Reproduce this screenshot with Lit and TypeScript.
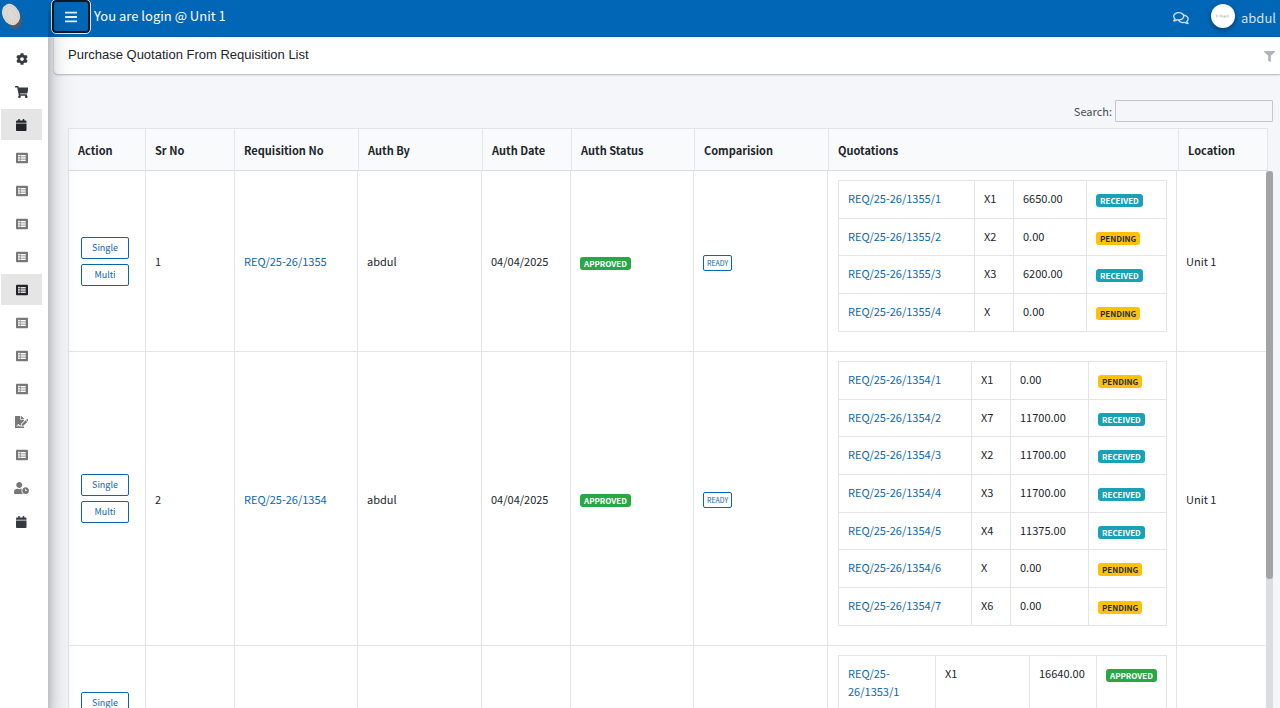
import { LitElement, html, css, svg } from "lit";
import { customElement, property, state } from "lit/decorators.js";
import { classMap } from "lit/directives/class-map.js";

const ICONS: Record<string, { w: number; d: string }> = {
  bars: { w: 448, d: "M16 132h416c8.837 0 16-7.163 16-16V76c0-8.837-7.163-16-16-16H16C7.163 60 0 67.163 0 76v40c0 8.837 7.163 16 16 16zm0 160h416c8.837 0 16-7.163 16-16v-40c0-8.837-7.163-16-16-16H16c-8.837 0-16 7.163-16 16v40c0 8.837 7.163 16 16 16zm0 160h416c8.837 0 16-7.163 16-16v-40c0-8.837-7.163-16-16-16H16c-8.837 0-16 7.163-16 16v40c0 8.837 7.163 16 16 16z" },
  cog: { w: 512, d: "M487.4 315.7l-42.6-24.6c4.3-23.2 4.3-47 0-70.2l42.6-24.6c4.9-2.8 7.1-8.6 5.5-14-11.1-35.6-30-67.8-54.7-94.6-3.8-4.1-10-5.1-14.8-2.3L380.8 110c-17.9-15.4-38.5-27.3-60.8-35.1V25.8c0-5.6-3.9-10.5-9.4-11.7-36.7-8.2-74.3-7.8-109.2 0-5.5 1.2-9.4 6.1-9.4 11.7V75c-22.2 7.9-42.8 19.8-60.8 35.1L88.7 85.5c-4.9-2.8-11-1.9-14.8 2.3-24.7 26.7-43.6 58.9-54.7 94.6-1.7 5.4.6 11.2 5.5 14L67.3 221c-4.3 23.2-4.3 47 0 70.2l-42.6 24.6c-4.9 2.8-7.1 8.6-5.5 14 11.1 35.6 30 67.8 54.7 94.6 3.8 4.1 10 5.1 14.8 2.3l42.6-24.6c17.9 15.4 38.5 27.3 60.8 35.1v49.2c0 5.6 3.9 10.5 9.4 11.7 36.7 8.2 74.3 7.8 109.2 0 5.5-1.2 9.4-6.1 9.4-11.7v-49.2c22.2-7.9 42.8-19.8 60.8-35.1l42.6 24.6c4.9 2.8 11 1.9 14.8-2.3 24.7-26.7 43.6-58.9 54.7-94.6 1.5-5.5-.7-11.3-5.6-14.1zM256 336c-44.1 0-80-35.9-80-80s35.9-80 80-80 80 35.9 80 80-35.9 80-80 80z" },
  cart: { w: 576, d: "M528.12 301.319l47.273-208C578.806 78.301 567.391 64 551.99 64H159.208l-9.166-44.81C147.758 8.021 137.93 0 126.529 0H24C10.745 0 0 10.745 0 24v16c0 13.255 10.745 24 24 24h69.883l70.248 343.435C147.325 417.1 136 435.222 136 456c0 30.928 25.072 56 56 56s56-25.072 56-56c0-15.674-6.447-29.835-16.824-40h209.647C430.447 426.165 424 440.326 424 456c0 30.928 25.072 56 56 56s56-25.072 56-56c0-22.172-12.888-41.332-31.579-50.405l5.517-24.276c3.413-15.018-8.002-29.319-23.403-29.319H218.117l-6.545-32h293.145c11.206 0 20.92-7.754 23.403-18.681z" },
  calendar: { w: 448, d: "M12 192h424c6.6 0 12 5.4 12 12v260c0 26.5-21.5 48-48 48H48c-26.5 0-48-21.5-48-48V204c0-6.6 5.4-12 12-12zm436-44v-36c0-26.5-21.5-48-48-48h-48V12c0-6.6-5.4-12-12-12h-40c-6.6 0-12 5.4-12 12v52H160V12c0-6.6-5.4-12-12-12h-40c-6.6 0-12 5.4-12 12v52H48C21.5 64 0 85.5 0 112v36c0 6.6 5.4 12 12 12h424c6.6 0 12-5.4 12-12z" },
  list: { w: 512, d: "M464 480H48c-26.51 0-48-21.49-48-48V80c0-26.51 21.49-48 48-48h416c26.51 0 48 21.49 48 48v352c0 26.51-21.49 48-48 48zM128 120c-22.091 0-40 17.909-40 40s17.909 40 40 40 40-17.909 40-40-17.909-40-40-40zm0 96c-22.091 0-40 17.909-40 40s17.909 40 40 40 40-17.909 40-40-17.909-40-40-40zm0 96c-22.091 0-40 17.909-40 40s17.909 40 40 40 40-17.909 40-40-17.909-40-40-40zm288-136v-32c0-6.627-5.373-12-12-12H204c-6.627 0-12 5.373-12 12v32c0 6.627 5.373 12 12 12h200c6.627 0 12-5.373 12-12zm0 96v-32c0-6.627-5.373-12-12-12H204c-6.627 0-12 5.373-12 12v32c0 6.627 5.373 12 12 12h200c6.627 0 12-5.373 12-12zm0 96v-32c0-6.627-5.373-12-12-12H204c-6.627 0-12 5.373-12 12v32c0 6.627 5.373 12 12 12h200c6.627 0 12-5.373 12-12z" },
  sign: { w: 576, d: "M218.17 424.14c-2.95-5.92-8.09-6.52-10.17-6.52s-7.22.59-10.02 6.19l-7.67 15.34c-6.37 12.78-25.03 11.37-29.48-2.09L144 386.59l-10.61 31.88c-5.89 17.66-22.38 29.53-41 29.53H80c-8.84 0-16-7.16-16-16s7.16-16 16-16h12.39c4.83 0 9.11-3.08 10.64-7.66l18.19-54.64c3.3-9.81 12.44-16.41 22.78-16.41s19.48 6.59 22.77 16.41l13.88 41.64c19.75-16.19 54.06-9.7 66 14.16 1.89 3.78 5.49 5.95 9.36 6.26v-82.12l128-127.09V160H248c-13.2 0-24-10.8-24-24V0H24C10.7 0 0 10.7 0 24v464c0 13.3 10.7 24 24 24h336c13.3 0 24-10.7 24-24v-40l-128-.11c-16.12-.31-30.58-9.28-37.83-23.75zM384 121.9c0-6.3-2.5-12.4-7-16.9L279.1 7c-4.5-4.5-10.6-7-17-7H256v128h128v-6.1zm-96 225.06V416h68.99l161.68-162.78-67.88-67.88L288 346.96zm280.54-179.63l-31.87-31.87c-9.94-9.94-26.07-9.94-36.01 0l-27.25 27.25 67.88 67.88 27.25-27.25c9.95-9.94 9.95-26.07 0-36.01z" },
  userClock: { w: 640, d: "M496 224c-79.6 0-144 64.4-144 144s64.4 144 144 144 144-64.4 144-144-64.4-144-144-144zm64 150.3c0 5.3-4.4 9.7-9.7 9.7h-60.6c-5.3 0-9.7-4.4-9.7-9.7v-76.6c0-5.3 4.4-9.7 9.7-9.7h12.6c5.3 0 9.7 4.4 9.7 9.7V352h38.3c5.3 0 9.7 4.4 9.7 9.7v12.6zM320 368c0-27.8 6.7-54.1 18.2-77.5-8-1.5-16.2-2.5-24.6-2.5h-16.7c-22.2 10.2-46.9 16-72.9 16s-50.6-5.8-72.9-16h-16.7C60.2 288 0 348.2 0 422.4V464c0 26.5 21.5 48 48 48h347.1c-45.3-31.9-75.1-84.5-75.1-144zm-96-112c70.7 0 128-57.3 128-128S294.7 0 224 0 96 57.3 96 128s57.3 128 128 128z" },
  filter: { w: 512, d: "M487.976 0H24.028C2.71 0-8.047 25.866 7.058 40.971L192 225.941V432c0 7.831 3.821 15.17 10.237 19.662l80 55.98C298.02 518.69 320 507.493 320 487.98V225.941l184.947-184.97C520.021 25.896 509.338 0 487.976 0z" },
  comments: { w: 576, d: "M532 386.2c27.5-27.1 44-61.1 44-98.2 0-80-76.5-146.1-176.2-157.9C368.3 72.5 294.3 32 208 32 93.1 32 0 103.6 0 192c0 37 16.5 71 44 98.2-15.3 30.7-37.3 54.5-37.7 54.9-6.3 6.7-8.1 16.5-4.4 25 3.6 8.5 12 14 21.2 14 53.5 0 96.7-20.2 125.2-38.8 9.2 2.1 18.7 3.7 28.4 4.9C208.1 407.6 281.8 448 368 448c20.8 0 40.8-2.4 59.8-6.8C456.3 459.7 499.4 480 553 480c9.2 0 17.5-5.5 21.2-14 3.6-8.5 1.9-18.3-4.4-25-.4-.3-22.5-24.1-37.8-54.8zm-392.8-92.3L122.1 305c-14.1 9.1-28.5 16.3-43.1 21.4 2.7-4.7 5.4-9.7 8-14.8l15.5-31.1L77.7 256C64.2 242.6 48 220.7 48 192c0-60.7 73.3-112 160-112s160 51.3 160 112-73.3 112-160 112c-16.5 0-33-1.9-49-5.6l-19.8-4.5zM498.3 352l-24.7 24.4 15.5 31.1c2.6 5.1 5.3 10.1 8 14.8-14.6-5.1-29-12.3-43.1-21.4l-17.1-11.1-19.9 4.6c-16 3.7-32.5 5.6-49 5.6-54 0-102.2-20.1-131.3-49.7C338 339.5 416 272.9 416 192c0-3.4-.4-6.7-.7-10C479.7 196.5 528 238.8 528 288c0 28.7-16.2 50.6-29.7 64z" },
};

const icon = (name: string, size = 12) => {
  const { w, d } = ICONS[name];
  return html`<svg height=${size} width=${(size * w) / 512} viewBox="0 0 ${w} 512" fill="currentColor" aria-hidden="true">${svg`<path d=${d}></path>`}</svg>`;
};

type Status = "APPROVED" | "RECEIVED" | "PENDING";
interface Quote { no: string; party: string; amount: string; status: Status }
interface Requisition { sr: number; no: string; by: string; date: string; status: Status; unit: string; cols: number[]; quotes: Quote[] }

const q = (no: string, party: string, amount: string, status: Status): Quote => ({ no, party, amount, status });

const ROWS: Requisition[] = [
  {
    sr: 1, no: "REQ/25-26/1355", by: "abdul", date: "04/04/2025", status: "APPROVED", unit: "Unit 1", cols: [136, 39, 73],
    quotes: [
      q("REQ/25-26/1355/1", "X1", "6650.00", "RECEIVED"),
      q("REQ/25-26/1355/2", "X2", "0.00", "PENDING"),
      q("REQ/25-26/1355/3", "X3", "6200.00", "RECEIVED"),
      q("REQ/25-26/1355/4", "X", "0.00", "PENDING"),
    ],
  },
  {
    sr: 2, no: "REQ/25-26/1354", by: "abdul", date: "04/04/2025", status: "APPROVED", unit: "Unit 1", cols: [133, 39, 78],
    quotes: [
      q("REQ/25-26/1354/1", "X1", "0.00", "PENDING"),
      q("REQ/25-26/1354/2", "X7", "11700.00", "RECEIVED"),
      q("REQ/25-26/1354/3", "X2", "11700.00", "RECEIVED"),
      q("REQ/25-26/1354/4", "X3", "11700.00", "RECEIVED"),
      q("REQ/25-26/1354/5", "X4", "11375.00", "RECEIVED"),
      q("REQ/25-26/1354/6", "X", "0.00", "PENDING"),
      q("REQ/25-26/1354/7", "X6", "0.00", "PENDING"),
    ],
  },
  {
    sr: 3, no: "REQ/25-26/1353", by: "abdul", date: "04/04/2025", status: "APPROVED", unit: "Unit 1", cols: [97, 94, 67],
    quotes: [
      q("REQ/25-26/1353/1", "X1", "16640.00", "APPROVED"),
      q("REQ/25-26/1353/2", "X2", "0.00", "PENDING"),
    ],
  },
];

const HEADINGS = ["Action", "Sr No", "Requisition No", "Auth By", "Auth Date", "Auth Status", "Comparision", "Quotations", "Location"];

@customElement("side-menu")
class SideMenu extends LitElement {
  static styles = css`
    :host { display: block; position: relative; z-index: 2; background: #fff; box-shadow: 0 14px 28px rgba(0, 0, 0, 0.25), 0 10px 10px rgba(0, 0, 0, 0.22); }
    .brand { display: flex; height: 37px; background: #0066b5; }
    nav { padding: 6px 6px 0 1px; }
    ul { list-style: none; margin: 0; padding: 0; display: grid; gap: 2px; }
    .sub { padding-bottom: 1px; }
    a { display: flex; align-items: center; justify-content: center; height: 31px; color: #343a40; }
    .sub a { color: #777; }
    .sub a.open, a.open { background: #e5e5e5; color: #212529; }
  `;
  private item(name: string, label: string, open = false) {
    return html`<li><a href="#" aria-label=${label} class=${classMap({ open })}>${icon(name)}</a></li>`;
  }
  render() {
    return html`
      <a class="brand" href="#" aria-label="Home">
        <svg width="48" height="37" viewBox="0 0 48 37" aria-hidden="true">
          <ellipse cx="13" cy="17.500" rx="8" ry="11.500" transform="rotate(-25 13 17.5)" fill="#55585c"></ellipse>
          <path d="M10 25L15 30L17 28L14 24Z" fill="#55585c"></path>
          <ellipse cx="11" cy="14.500" rx="8.500" ry="11" transform="rotate(-25 11 14.5)" fill="#dedbd7"></ellipse>
          <ellipse cx="11" cy="14.500" rx="6.500" ry="9" transform="rotate(-25 11 14.5)" fill="none" stroke="#c4c1bd" stroke-dasharray="1 1"></ellipse>
          <ellipse cx="11" cy="14.500" rx="3.500" ry="6" transform="rotate(-25 11 14.5)" fill="none" stroke="#cac7c3" stroke-dasharray="1 1"></ellipse>
        </svg>
      </a>
      <nav aria-label="Main">
        <ul>
          ${this.item("cog", "Settings")}${this.item("cart", "Purchase")}${this.item("calendar", "Requisition", true)}
          <li>
            <ul class="sub">
              ${["list", "list", "list", "list", "list", "list", "list", "list", "sign", "list", "userClock"].map((n, i) => this.item(n, `Item ${i + 1}`, i === 4))}
            </ul>
          </li>
          ${this.item("calendar", "Calendar")}
        </ul>
      </nav>
    `;
  }
}

@customElement("top-bar")
class TopBar extends LitElement {
  static styles = css`
    :host { display: flex; align-items: center; height: 37px; padding: 0 4px; background: #0066b5; color: #fff; font-size: 13px; line-height: 18px; }
    .toggle { display: grid; place-items: center; width: 38px; height: 33px; margin: 0 4px 4px 0; padding: 0; background: none; color: #e6eef6; border: 2px solid #101820; border-radius: 4px; outline: 1px solid #d5e4f2; }
    .where { padding-bottom: 6px; }
    .right { margin-left: auto; display: flex; align-items: center; padding-bottom: 2px; color: #cfe0f0; }
    .chat { display: flex; color: inherit; margin-right: 22px; }
    .user { display: flex; align-items: center; gap: 6px; color: inherit; text-decoration: none; }
    .avatar { display: grid; place-items: center; width: 24px; height: 24px; margin-bottom: 3px; border-radius: 50%; background: #fff; box-shadow: 0 2px 5px rgba(0, 0, 0, 0.4); }
  `;
  render() {
    return html`
      <button class="toggle" aria-label="Toggle menu">${icon("bars", 14)}</button>
      <span class="where">You are login @ Unit 1</span>
      <div class="right">
        <a class="chat" href="#" aria-label="Messages">${icon("comments", 14)}</a>
        <a class="user" href="#">
          <span class="avatar">
            <svg width="14" height="4" viewBox="0 0 14 4" aria-hidden="true"><path d="M1 .5v3M3 2h1M5 .5v3M7 1.500v2M8.500 1.500v2M10 1.500v2M12 1v2.500" stroke="#aaa" stroke-width=".8"></path></svg>
          </span>
          <span>abdul</span>
        </a>
      </div>
    `;
  }
}

@customElement("status-badge")
class StatusBadge extends LitElement {
  @property() status: Status = "PENDING";
  static styles = css`
    :host { display: inline-flex; vertical-align: middle; }
    .badge { padding: 0 4px; border-radius: 3px; font-size: 8px; font-weight: 700; line-height: 13px; color: #fff; }
    .approved { background: #28a745; }
    .received { background: #17a2b8; }
    .pending { background: #ffc107; color: #1f2d3d; }
  `;
  render() {
    return html`<span class="badge ${this.status.toLowerCase()}">${this.status}</span>`;
  }
}

@customElement("requisition-table")
class RequisitionTable extends LitElement {
  static styles = css`
    :host { display: flex; flex-direction: column; flex: 1; min-height: 0; }
    table { border-collapse: separate; border-spacing: 0; table-layout: fixed; width: 100%; }
    th, td { border: 0 solid #e2e5e8; text-align: left; font-weight: 400; padding: 0 9px; }
    a { color: #0b66b0; text-decoration: none; }
    .head { padding-right: 5px; }
    .head table { background: #f8fafc; border-right: 1px solid #e2e5e8; }
    .head th { height: 41px; border-width: 1px 0 1px 1px; border-bottom-color: #d8dbde; font-weight: 700; }
    .w-action { width: 77px; }
    .w-sr, .w-date { width: 89px; }
    .w-no, .w-status { width: 123px; }
    .w-by { width: 124px; }
    .w-compare { width: 134px; }
    .w-unit { width: 90px; }
    .head .w-no { width: 124px; }
    .head .w-unit { width: 89px; }
    .body { display: flex; flex: 1; min-height: 0; overflow: hidden; }
    .rows { flex: 1; min-width: 0; }
    .rows > table { background: #fff; }
    .cell { border-width: 0 0 1px 1px; }
    .quotes-cell { padding: 9px 9px 19px 10px; }
    .actions { display: grid; justify-items: start; gap: 5px; padding-left: 3px; }
    button { font: inherit; background: #fff; color: #0b66b0; border: 1px solid #0b66b0; border-radius: 2px; padding: 0; }
    .action { width: 48px; height: 22px; font-size: 9px; }
    .ready { height: 16px; padding: 0 3px; font-size: 7px; line-height: 14px; vertical-align: middle; }
    .quotes { border: 0 solid #e2e5e8; border-width: 1px 1px 0 0; }
    .quotes td { box-sizing: border-box; height: 38px; border-width: 0 0 1px 1px; padding: 8px 9px 11px; line-height: 18px; vertical-align: top; }
    .quotes tr:nth-child(3n + 2) td { height: 37px; padding-bottom: 10px; }
    .track { width: 7px; background: #dcdde0; }
    .thumb { height: 76%; background: #a3a3a5; border-radius: 4px; }
  `;

  private cols() {
    return html`<colgroup>
      <col class="w-action" /><col class="w-sr" /><col class="w-no" /><col class="w-by" /><col class="w-date" /><col class="w-status" /><col class="w-compare" /><col /><col class="w-unit" />
    </colgroup>`;
  }

  private quotes(r: Requisition) {
    return html`<table class="quotes">
      <colgroup>${r.cols.map((w) => html`<col style="width:${w}px" />`)}<col /></colgroup>
      <tbody>
        ${r.quotes.map((x) => html`<tr>
          <td><a href="#">${x.no}</a></td>
          <td>${x.party}</td>
          <td>${x.amount}</td>
          <td><status-badge status=${x.status}></status-badge></td>
        </tr>`)}
      </tbody>
    </table>`;
  }

  render() {
    return html`
      <div class="head"><table>
        ${this.cols()}
        <thead><tr>${HEADINGS.map((h) => html`<th scope="col">${h}</th>`)}</tr></thead>
      </table></div>
      <div class="body">
        <div class="rows"><table>
          ${this.cols()}
          <tbody>
            ${ROWS.map((r) => html`<tr>
              <td class="cell"><div class="actions"><button class="action">Single</button><button class="action">Multi</button></div></td>
              <td class="cell">${r.sr}</td>
              <td class="cell"><a href="#">${r.no}</a></td>
              <td class="cell">${r.by}</td>
              <td class="cell">${r.date}</td>
              <td class="cell"><status-badge status=${r.status}></status-badge></td>
              <td class="cell"><button class="ready">READY</button></td>
              <td class="cell quotes-cell">${this.quotes(r)}</td>
              <td class="cell">${r.unit}</td>
            </tr>`)}
          </tbody>
        </table></div>
        <div class="track"><div class="thumb"></div></div>
      </div>
    `;
  }
}

@customElement("app-root")
class AppRoot extends LitElement {
  @state() private term = "";
  static styles = css`
    :host { display: grid; grid-template-columns: 48px minmax(0, 1fr); height: 100vh; overflow: hidden; background: #f4f6f9; color: #212529; font-family: "Noto Sans CJK SC", "Noto Sans", sans-serif; font-size: 11px; line-height: 18px; }
    .main { display: flex; flex-direction: column; min-width: 0; min-height: 0; }
    .title { display: flex; align-items: center; justify-content: space-between; height: 37px; margin-left: 6px; padding: 0 5px 0 14px; background: #fff; border-radius: 0 0 0 4px; box-shadow: 0 0 1px rgba(0, 0, 0, 0.2), 0 1px 2px rgba(0, 0, 0, 0.25); }
    h1 { margin: 0; padding-bottom: 2px; font: 400 13px/18px "Liberation Sans", Arial, sans-serif; }
    .filter { display: flex; padding: 2px 0 0; border: 0; background: none; color: #adb5bd; }
    .content { display: flex; flex-direction: column; flex: 1; min-height: 0; padding: 26px 7px 0 20px; }
    .search { display: flex; align-items: center; justify-content: flex-end; gap: 3px; margin-bottom: 6px; color: #444b52; }
    input { box-sizing: border-box; width: 158px; height: 22px; padding: 0 4px; font: inherit; background: #f4f6f9; border: 1px solid #c2c5c9; border-radius: 1px; }
  `;
  render() {
    return html`
      <side-menu></side-menu>
      <div class="main">
        <top-bar></top-bar>
        <div class="title"><h1>Purchase Quotation From Requisition List</h1><button class="filter" aria-label="Filter">${icon("filter", 11)}</button></div>
        <div class="content">
          <div class="search">
            <label for="search">Search:</label>
            <input id="search" type="search" .value=${this.term} @input=${(e: Event) => (this.term = (e.target as HTMLInputElement).value)} />
          </div>
          <requisition-table></requisition-table>
        </div>
      </div>
    `;
  }
}
